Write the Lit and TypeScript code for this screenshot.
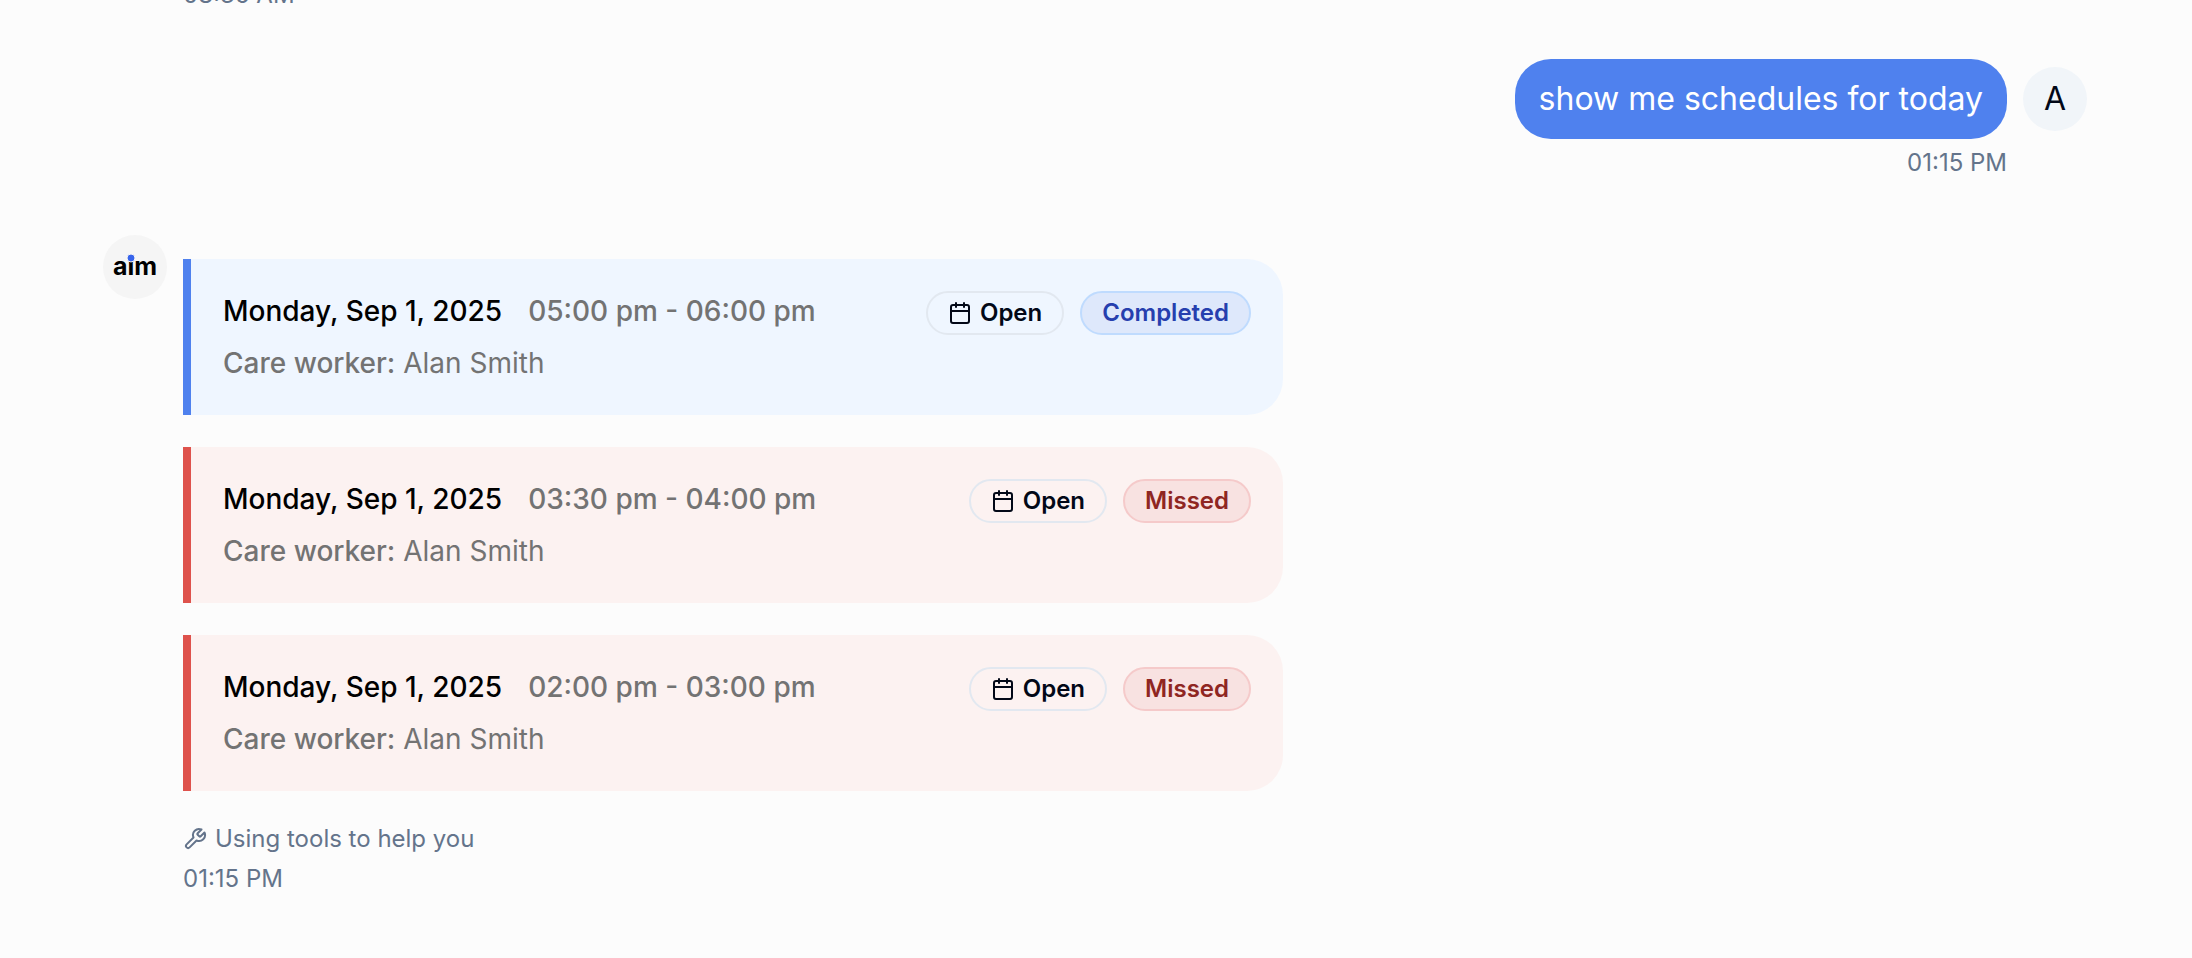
import { LitElement, html, css, svg } from "lit";
import { customElement, property } from "lit/decorators.js";

type Status = "completed" | "missed";

interface Visit {
  date: string;
  time: string;
  worker: string;
  status: Status;
}

const visits: Visit[] = [
  { date: "Monday, Sep 1, 2025", time: "05:00 pm - 06:00 pm", worker: "Alan Smith", status: "completed" },
  { date: "Monday, Sep 1, 2025", time: "03:30 pm - 04:00 pm", worker: "Alan Smith", status: "missed" },
  { date: "Monday, Sep 1, 2025", time: "02:00 pm - 03:00 pm", worker: "Alan Smith", status: "missed" },
];

const calendarIcon = html`<svg class="icon" viewBox="0 0 24 24" aria-hidden="true">
  ${svg`<path d="M8 2v4"/><path d="M16 2v4"/><rect width="18" height="18" x="3" y="4" rx="2"/><path d="M3 10h18"/>`}
</svg>`;

const wrenchIcon = html`<svg class="icon" viewBox="0 0 24 24" aria-hidden="true">
  ${svg`<path d="M14.7 6.3a1 1 0 0 0 0 1.4l1.6 1.6a1 1 0 0 0 1.4 0l3.77-3.77a6 6 0 0 1-7.94 7.94l-6.91 6.91a2.12 2.12 0 0 1-3-3l6.91-6.91a6 6 0 0 1 7.94-7.94l-3.76 3.76z"/>`}
</svg>`;

const iconStyles = css`
  .icon {
    width: 24px;
    height: 24px;
    flex: none;
    fill: none;
    stroke: currentColor;
    stroke-width: 2;
    stroke-linecap: round;
    stroke-linejoin: round;
  }
`;

@customElement("visit-card")
export class VisitCard extends LitElement {
  @property({ attribute: false }) visit!: Visit;

  static styles = [
    iconStyles,
    css`
      :host {
        display: block;
      }
      .card {
        display: flex;
        justify-content: space-between;
        align-items: flex-start;
        gap: 16px;
        padding: 32px;
        border-left: 8px solid;
        border-radius: 0 36px 36px 0;
      }
      .card.completed {
        background: #eff6ff;
        border-color: #4f81ee;
      }
      .card.missed {
        background: #fcf2f1;
        border-color: #de524c;
      }
      .details {
        display: flex;
        flex-direction: column;
        gap: 12px;
        color: #737373;
      }
      .line {
        margin: 0;
        font-size: 28px;
        line-height: 40px;
      }
      .when {
        display: flex;
        gap: 26px;
        font-weight: 500;
      }
      .date {
        color: #000;
      }
      .label {
        font-weight: 500;
      }
      .actions {
        display: flex;
        gap: 16px;
      }
      .pill {
        display: inline-flex;
        align-items: center;
        gap: 8px;
        box-sizing: border-box;
        height: 44px;
        padding: 0 20px;
        border: 2px solid;
        border-radius: 22px;
        font: 600 24px/32px Inter, sans-serif;
      }
      .open {
        background: transparent;
        border-color: #e2e8f0;
        color: #020817;
        cursor: pointer;
      }
      .badge.completed {
        background: #dee8fb;
        border-color: #bfdbfe;
        color: #263fae;
      }
      .badge.missed {
        background: #f8e2e1;
        border-color: #f5caca;
        color: #8f2622;
      }
    `,
  ];

  render() {
    const { date, time, worker, status } = this.visit;
    return html`
      <article class="card ${status}">
        <div class="details">
          <p class="line when"><span class="date">${date}</span><span>${time}</span></p>
          <p class="line"><span class="label">Care worker:</span> ${worker}</p>
        </div>
        <div class="actions">
          <button class="pill open" type="button">${calendarIcon}Open</button>
          <span class="pill badge ${status}">${status === "completed" ? "Completed" : "Missed"}</span>
        </div>
      </article>
    `;
  }
}

@customElement("app-root")
export class AppRoot extends LitElement {
  static styles = [
    iconStyles,
    css`
      :host {
        display: flex;
        flex-direction: column;
        justify-content: flex-end;
        gap: 48px;
        box-sizing: border-box;
        height: 100vh;
        overflow: hidden;
        padding: 0 105px 63px 103px;
        background: #fcfcfc;
        color: #020817;
        font-family: Inter, sans-serif;
        font-optical-sizing: none;
      }
      .message {
        display: flex;
        gap: 16px;
        flex: none;
      }
      .message.user {
        justify-content: flex-end;
      }
      .avatar {
        display: flex;
        align-items: center;
        justify-content: center;
        flex: none;
        width: 64px;
        height: 64px;
        margin-top: 8px;
        border-radius: 50%;
        background: #f1f5f9;
        font-size: 32px;
        line-height: 48px;
      }
      .avatar.bot {
        background: #f5f5f5;
      }
      .spacer {
        flex: none;
        width: 64px;
      }
      .logo {
        width: 64px;
        height: 64px;
        font-family: Inter, sans-serif;
        font-weight: 700;
      }
      .body {
        display: flex;
        flex-direction: column;
        gap: 8px;
        min-width: 0;
      }
      .user .body {
        align-items: flex-end;
      }
      .bubble {
        margin: 0;
        padding: 16px 24px;
        border-radius: 36px;
        background: #4f81ee;
        color: #fff;
        font-size: 32px;
        line-height: 48px;
      }
      .meta {
        display: flex;
        align-items: center;
        gap: 8px;
        color: #64748b;
        font-size: 24px;
        line-height: 32px;
      }
      .bot-body {
        flex: 0 1 1100px;
      }
      .cards {
        display: flex;
        flex-direction: column;
        gap: 32px;
        padding: 32px 0 24px;
      }
    `,
  ];

  render() {
    return html`
      <div class="message">
        <div class="spacer"></div>
        <div class="body"><time class="meta">08:36 AM</time></div>
      </div>
      <div class="message user">
        <div class="body">
          <p class="bubble">show me schedules for today</p>
          <time class="meta">01:15 PM</time>
        </div>
        <div class="avatar">A</div>
      </div>
      <div class="message">
        <div class="avatar bot">
          <svg class="logo" viewBox="0 0 64 64" role="img" aria-label="aim">
            <text x="32" y="40" text-anchor="middle" font-size="25">aım</text>
            <circle cx="28" cy="23" r="4" fill="#3764eb" stroke="#f5f5f5" stroke-width="1" />
          </svg>
        </div>
        <div class="body bot-body">
          <div class="cards">${visits.map((v) => html`<visit-card .visit=${v}></visit-card>`)}</div>
          <div class="meta">${wrenchIcon}Using tools to help you</div>
          <time class="meta">01:15 PM</time>
        </div>
      </div>
    `;
  }
}
